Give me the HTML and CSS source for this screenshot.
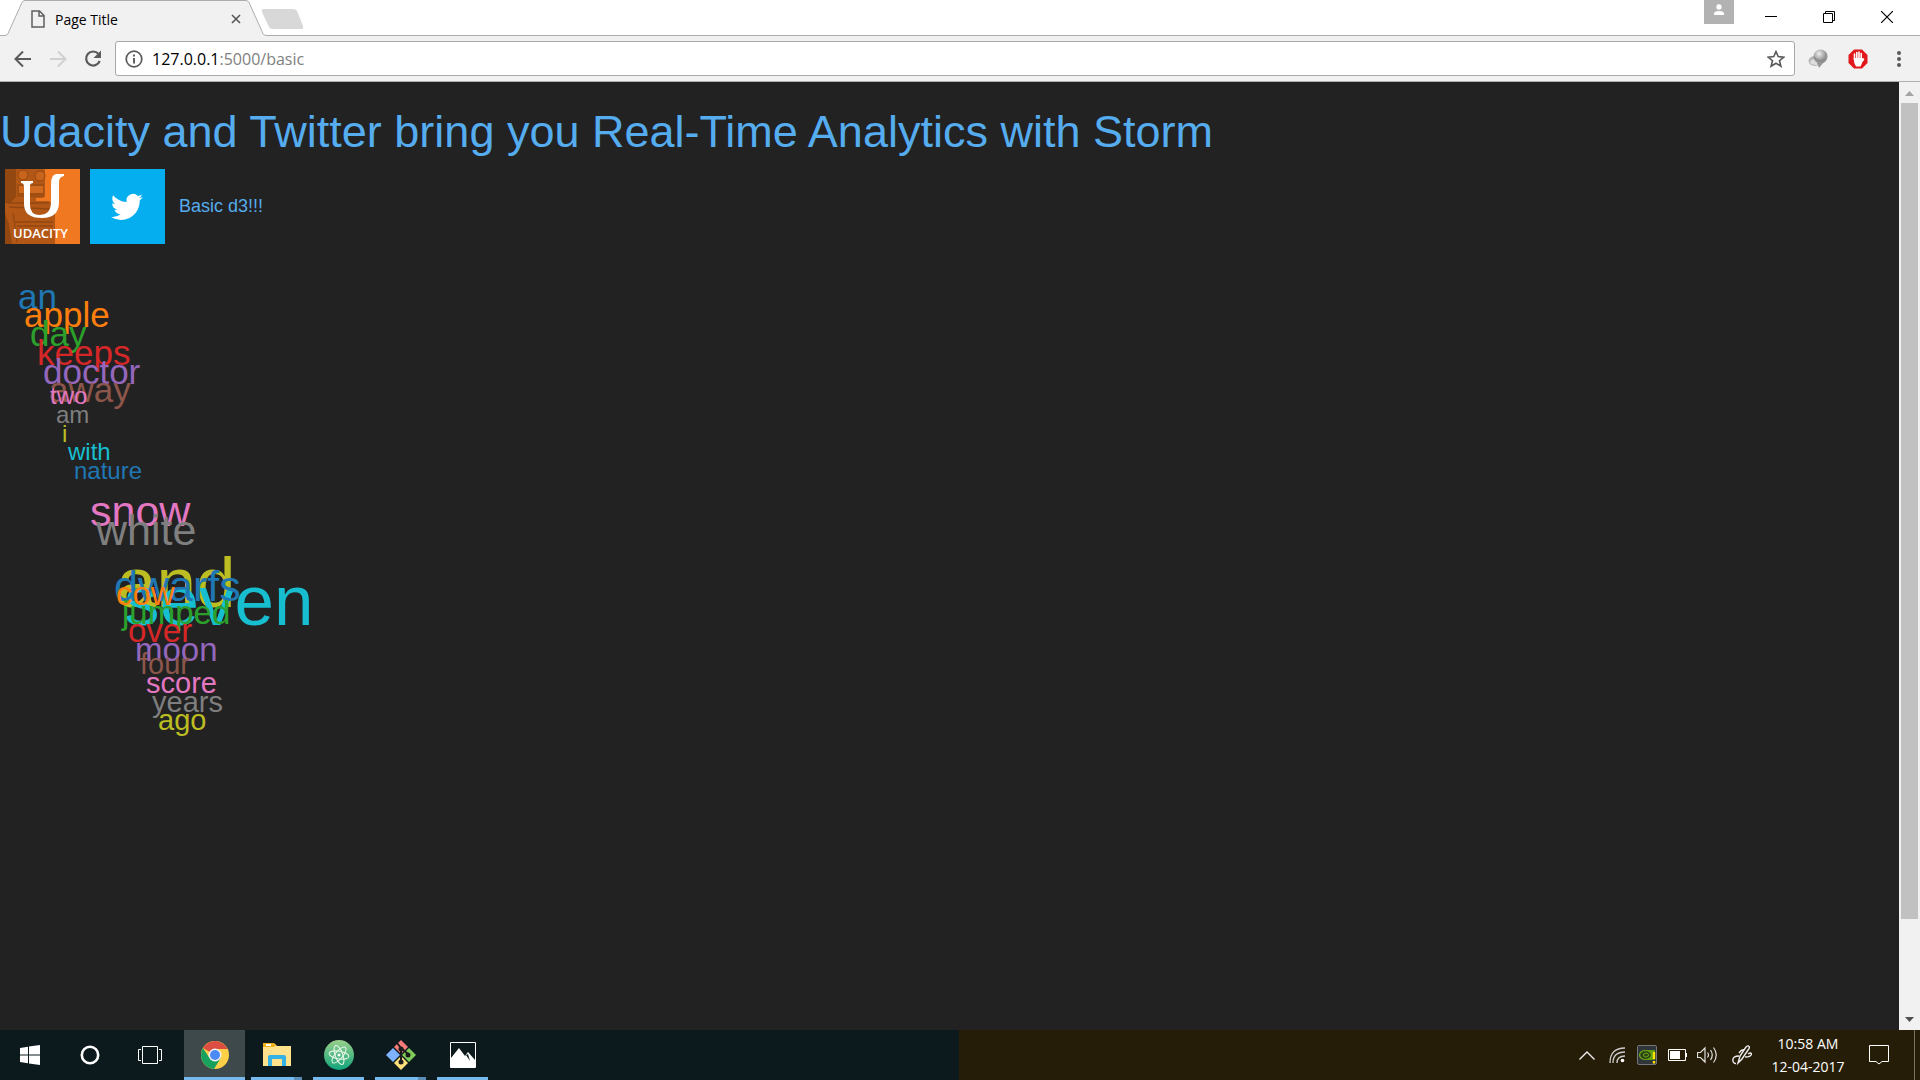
FILE: index.html
```html
<!DOCTYPE html>
<html lang="en">
<head>
<meta charset="utf-8">
<title>Page Title</title>
<link rel="stylesheet" href="styles.css">
</head>
<body>
<div class="screen">
  <header class="browser">
    <div class="tabstrip">
      <div class="tab">
        <svg class="tab-shape" width="266" height="36" viewBox="0 0 266 36"><path d="M0 36V35.500H5Q7 35.500 8 33.500L22 2.500Q23 .5 25 .5H246Q248 .5 249 2.500L263 33.500Q264 35.500 266 35.500V36Z" fill="#f1f1f1"/><path d="M0 35.500H5Q7 35.500 8 33.500L22 2.500Q23 .5 25 .5H246Q248 .5 249 2.500L263 33.500Q264 35.500 266 35.500" fill="none" stroke="#adadad"/></svg>
        <svg width="14" height="18" viewBox="0 0 14 18" fill="none" stroke="#5f5f5f" stroke-width="1.500"><path d="M1 1H8.500L13 5.500V17H1ZM8 1V6H13"/></svg>
        <span class="tab-title">Page Title</span>
        <button class="tab-close" aria-label="Close tab"><svg width="10" height="10" viewBox="0 0 10 10" stroke="#555" stroke-width="1.600"><path d="M1 1L9 9M9 1L1 9"/></svg></button>
      </div>
      <button class="new-tab" aria-label="New tab"><svg width="44" height="22" viewBox="0 0 44 22"><path d="M3 1H32Q35 1 36 3L42 18Q43 21 40 21H12Q9 21 8 19L1 4Q0 1 3 1Z" fill="#d8d8d8"/></svg></button>
      <div class="window-controls">
        <button class="profile" aria-label="Profile"><svg width="12" height="12" viewBox="0 0 12 12" fill="#fff"><circle cx="6" cy="3" r="2.700"/><path d="M1 11V9.500Q1 7 6 7T11 9.500V11Z"/></svg></button>
        <button aria-label="Minimize"><svg width="12" height="12" viewBox="0 0 12 12" stroke="#000"><path d="M0 5.500H12"/></svg></button>
        <button aria-label="Restore"><svg width="12" height="12" viewBox="0 0 12 12" stroke="#000" fill="none"><path d="M.5 2.500H9.500V11.500H.5ZM2.500 2.500V.5H11.500V9.500H9.500"/></svg></button>
        <button aria-label="Close"><svg width="12" height="12" viewBox="0 0 12 12" stroke="#000" stroke-width="1.200"><path d="M0 0L12 12M12 0L0 12"/></svg></button>
      </div>
    </div>
    <div class="toolbar">
      <div class="nav">
        <button aria-label="Back"><svg width="18" height="18" viewBox="0 0 18 18" fill="none" stroke="#5a5a5a" stroke-width="2"><path d="M17 9H2M9 1.500L1.500 9L9 16.500"/></svg></button>
        <button aria-label="Forward"><svg width="18" height="18" viewBox="0 0 18 18" fill="none" stroke="#d0d0d0" stroke-width="2"><path d="M1 9H16M9 1.500L16.500 9L9 16.500"/></svg></button>
        <button aria-label="Reload"><svg width="18" height="18" viewBox="0 0 18 18"><path d="M14.500 4A7 7 0 1 0 15.700 11" fill="none" stroke="#5a5a5a" stroke-width="2.200"/><path d="M17 .5V8H9.500Z" fill="#5a5a5a"/></svg></button>
      </div>
      <div class="omnibox">
        <svg width="18" height="18" viewBox="0 0 18 18"><circle cx="9" cy="9" r="7.800" fill="none" stroke="#5a5a5a" stroke-width="1.700"/><path d="M9 8V13.500M9 4.500V6.500" stroke="#5a5a5a" stroke-width="1.900"/></svg>
        <a class="url" href="/basic">127.0.0.1<span class="url-path">:5000/basic</span></a>
        <button class="star" aria-label="Bookmark"><svg width="18" height="18" viewBox="0 0 18 18"><path d="M9 1.500L11.200 6.600L16.800 7.100L12.500 10.700L13.900 16.200L9 13.200L4.100 16.200L5.500 10.700L1.200 7.100L6.800 6.600Z" fill="none" stroke="#5a5a5a" stroke-width="1.600"/></svg></button>
      </div>
      <div class="extensions">
        <button aria-label="Extension"><svg width="20" height="20" viewBox="0 0 20 20"><defs><radialGradient id="ball" cx=".4" cy=".3"><stop offset="0" stop-color="#eee"/><stop offset="1" stop-color="#929292"/></radialGradient></defs><ellipse cx="7" cy="12" rx="6.500" ry="5" fill="#b5b5b5"/><ellipse cx="8" cy="13" rx="6" ry="3" fill="#ddd"/><path d="M9 14L11 19L16 13Z" fill="#999"/><circle cx="12.500" cy="7.500" r="7" fill="url(#ball)"/><path d="M6 8Q11 14 18 10" fill="none" stroke="#888"/></svg></button>
        <button aria-label="Ad blocker"><svg width="20" height="20" viewBox="0 0 20 20"><path d="M6 .5H14L19.500 6V14L14 19.500H6L.5 14V6Z" fill="#e1191d"/><path d="M6.500 5V11M8.800 3.500V10M11 3V10M13.200 4.500V11" stroke="#fff" stroke-width="1.600" stroke-linecap="round"/><path d="M5.700 9H14L16 9.500Q17 10 14.500 13L12.500 17.500H8Q5.700 14 5.700 9Z" fill="#fff"/></svg></button>
      </div>
      <button class="menu" aria-label="Menu"><svg width="6" height="18" viewBox="0 0 6 18" fill="#5a5a5a"><circle cx="3" cy="3" r="2"/><circle cx="3" cy="9" r="2"/><circle cx="3" cy="15" r="2"/></svg></button>
    </div>
  </header>

  <div class="viewport">
    <main class="page">
      <h1>Udacity and Twitter bring you Real-Time Analytics with Storm</h1>
      <div class="brands">
        <svg class="logo" viewBox="0 0 75 75" role="img" aria-label="Udacity">
          <path d="M0 0H75V75H0Z" fill="#f07820"/>
          <path d="M0 0H40V26Q40 29 37 29H31V32H44L50 38V75H0Z" fill="#b35716"/>
          <path d="M0 0H11V28L5 34H0ZM0 44L4 55L7 75H0Z" fill="#944811"/>
          <path d="M12 15H39V28H12Z" fill="#a04e12"/>
          <circle cx="18" cy="6" r="5" fill="#c9641d" stroke="#944811"/><circle cx="35" cy="7" r="5" fill="#c9641d" stroke="#944811"/>
          <path d="M14 17H38V24H14Z" fill="#d06a20"/>
          <path d="M2 34H44M4 38L44 40M8 44L12 73M10 53H48M12 57H48" fill="none" stroke="#944811" stroke-width="1.300"/>
          <path d="M16 12H28V14Q25 14 25 17V36Q25 46 35 46Q45 46 46 35V15Q46 6 51 5H59V7Q54 8 54 13V33Q54 49 37 49Q19 49 19 35V18Q19 14 16 14Z" fill="#fff"/>
          <text class="logo-name" x="8" y="69" fill="#fff">UDACITY</text>
        </svg>
        <svg class="logo" viewBox="0 0 75 75" role="img" aria-label="Twitter">
          <path d="M0 0H75V75H0Z" fill="#05aeef"/>
          <path transform="translate(21 22) scale(1.330)" d="M23.950 4.570a10 10 0 0 1-2.820.77 4.960 4.960 0 0 0 2.160-2.720c-.95.550-2 .950-3.120 1.180a4.920 4.920 0 0 0-8.380 4.480C7.690 8.090 4.070 6.130 1.640 3.160a4.800 4.800 0 0 0-.66 2.470c0 1.710.87 3.210 2.180 4.100a4.900 4.900 0 0 1-2.230-.61v.06a4.920 4.920 0 0 0 3.950 4.820 5 5 0 0 1-2.210.09 4.940 4.940 0 0 0 4.600 3.420A9.870 9.870 0 0 1 0 19.540a14 14 0 0 0 7.550 2.210c9.050 0 14-7.500 14-13.980 0-.21 0-.42-.02-.63a9.900 9.900 0 0 0 2.460-2.550z" fill="#fff"/>
        </svg>
        <span class="caption">Basic d3!!!</span>
      </div>
      <svg class="cloud" width="600" height="480">
        <g class="s35">
          <text x="18" y="39" fill="#1f77b4">an</text>
          <text x="24" y="57" fill="#ff7f0e">apple</text>
          <text x="30" y="76" fill="#2ca02c">day</text>
          <text x="37" y="95" fill="#d62728">keeps</text>
          <text x="43" y="114" fill="#9467bd">doctor</text>
          <text x="49" y="132" fill="#8c564b">away</text>
        </g>
        <g class="s24">
          <text x="50" y="134" fill="#e377c2">two</text>
          <text x="56" y="153" fill="#7f7f7f">am</text>
          <text x="62" y="172" fill="#bcbd22">i</text>
          <text x="68" y="190" fill="#17becf">with</text>
          <text x="74" y="209" fill="#1f77b4">nature</text>
        </g>
        <g class="s43">
          <text x="90" y="256" fill="#e377c2">snow</text>
          <text x="96" y="275" fill="#7f7f7f">white</text>
        </g>
        <g class="s71">
          <text x="117" y="337" fill="#bcbd22">and</text>
          <text x="124" y="355" fill="#17becf">seven</text>
        </g>
        <g class="s43">
          <text x="114" y="331" fill="#1f77b4">dwarfs</text>
        </g>
        <g class="s33">
          <text x="116" y="335" fill="#ff7f0e">cow</text>
          <text x="122" y="354" fill="#2ca02c">jumped</text>
          <text x="128" y="372" fill="#d62728">over</text>
          <text x="135" y="391" fill="#9467bd">moon</text>
        </g>
        <g class="s29">
          <text x="140" y="404" fill="#8c564b">four</text>
          <text x="146" y="423" fill="#e377c2">score</text>
          <text x="152" y="442" fill="#7f7f7f">years</text>
          <text x="158" y="460" fill="#bcbd22">ago</text>
        </g>
      </svg>
    </main>
    <div class="scrollbar">
      <svg width="9" height="5" viewBox="0 0 9 5"><path d="M0 5L4.500 0L9 5Z" fill="#a3a3a3"/></svg>
      <div class="track"><div class="thumb"></div></div>
      <svg width="9" height="5" viewBox="0 0 9 5"><path d="M0 0L4.500 5L9 0Z" fill="#505050"/></svg>
    </div>
  </div>

  <footer class="taskbar">
    <button class="sys" aria-label="Start"><svg width="20" height="20" viewBox="0 0 20 20" fill="#fff"><path d="M0 3L8 1.800V9.500H0ZM9 1.600L20 0V9.500H9ZM0 10.500H8V18.200L0 17ZM9 10.500H20V20L9 18.400Z"/></svg></button>
    <button class="sys" aria-label="Cortana"><svg width="20" height="20" viewBox="0 0 20 20"><circle cx="10" cy="10" r="8.200" fill="none" stroke="#fff" stroke-width="2.600"/></svg></button>
    <button class="sys" aria-label="Task view"><svg width="24" height="18" viewBox="0 0 24 18" fill="none" stroke="#fff"><path d="M4.500.5H19.500V17.500H4.500ZM3 3.500H.5V14.500H3M21 3.500H23.500V14.500H21"/></svg></button>
    <button class="app active" aria-label="Chrome"><svg width="28" height="28" viewBox="0 0 28 28"><circle cx="14" cy="14" r="14" fill="#fdd047"/><path d="M14 14L1.900 7A14 14 0 0 1 26.100 7Q27 8 27 8H14Z" fill="#dc4e41"/><path d="M1.900 7A14 14 0 0 0 13 28L19.500 17.500L14 14L8.500 17Z" fill="#17a05e"/><circle cx="14" cy="14" r="6.500" fill="#f1f1f1"/><circle cx="14" cy="14" r="5" fill="#4b8af4"/></svg></button>
    <button class="app stacked" aria-label="File Explorer"><svg width="28" height="24" viewBox="0 0 28 24"><path d="M0 1H12L14 3H28V23H0Z" fill="#ffe28b"/><path d="M0 0H11L13 2L11 4H0Z" fill="#eeb31c"/><path d="M3 1H8V3H3Z" fill="#fff"/><path d="M5 23V14Q5 12 7 12H21Q23 12 23 14V23H19V16H9V23Z" fill="#35b1e6"/></svg></button>
    <button class="app" aria-label="Atom"><svg width="30" height="30" viewBox="0 0 30 30"><defs><linearGradient id="atom" x2="0" y2="1"><stop offset="0" stop-color="#9ad08b"/><stop offset="1" stop-color="#10a37c"/></linearGradient></defs><circle cx="15" cy="15" r="15" fill="url(#atom)"/><g fill="none" stroke="#e4f5e6" stroke-width="1.100"><ellipse cx="15" cy="15" rx="10" ry="3.800" transform="rotate(10 15 15)"/><ellipse cx="15" cy="15" rx="10" ry="3.800" transform="rotate(70 15 15)"/><ellipse cx="15" cy="15" rx="10" ry="3.800" transform="rotate(130 15 15)"/></g><circle cx="15" cy="15" r="1.500" fill="#fff"/></svg></button>
    <button class="app stacked" aria-label="Git"><svg width="30" height="30" viewBox="0 0 30 30"><path d="M15 0L22 7L15 14L8 7Z" fill="#f77b7b"/><path d="M23 8L30 15L23 22L16 15Z" fill="#80cc5b"/><path d="M7 8L14 15L7 22L0 15Z" fill="#80b3ff"/><path d="M15 16L22 23L15 30L8 23Z" fill="#ffe07a"/><path d="M11 3L15 8V22M15 8L22 14" fill="none" stroke="#1c1c1c" stroke-width="2"/><circle cx="15" cy="9" r="2.500" fill="#1c1c1c"/><circle cx="22" cy="15" r="2.500" fill="#1c1c1c"/><circle cx="15" cy="22" r="2.500" fill="#1c1c1c"/></svg></button>
    <button class="app" aria-label="Photos"><svg width="26" height="26" viewBox="0 0 26 26"><path d="M.5.5H25.500V25.500H.5Z" fill="#0d1a1d" stroke="#fff"/><path d="M1 16L9 6L15 14L18 10L25 18V25H1Z" fill="#fff"/><path d="M16 13L20 19L18 12Z" fill="#0d1a1d"/></svg></button>
    <div class="tray">
      <button aria-label="Show hidden icons"><svg width="16" height="9" viewBox="0 0 16 9" fill="none" stroke="#eee" stroke-width="1.400"><path d="M.5 8.500L8 1L15.500 8.500"/></svg></button>
      <button aria-label="Wi-Fi"><svg width="16" height="16" viewBox="0 0 16 16" fill="none" stroke="#ccc" stroke-width="1.300"><path d="M1 16Q1 1 16 1M4 16Q4 5 16 5M8 16Q8 9 16 9"/><circle cx="13.500" cy="13.500" r="1.800" fill="#fff" stroke="none"/></svg></button>
      <button aria-label="NVIDIA"><svg width="20" height="20" viewBox="0 0 20 20"><rect x=".5" y=".5" width="19" height="19" rx="1.500" fill="#2f3539" stroke="#73777a"/><path d="M8 5H18V15H8Z" fill="#5f9d0c"/><ellipse cx="8.500" cy="10" rx="6" ry="4.500" fill="#2f4513" stroke="#6ba814" stroke-width="1.200"/><ellipse cx="9" cy="10" rx="2.500" ry="2" fill="none" stroke="#6ba814"/><path d="M17 7V14M17 16V18.500" stroke="#ffe500" stroke-width="2.400"/></svg></button>
      <button aria-label="Battery"><svg width="19" height="12" viewBox="0 0 19 12"><path d="M.5.5H17.500V11.500H.5Z" fill="none" stroke="#fff"/><path d="M2 2H12V10H2ZM18 4H19V8H18Z" fill="#fff"/></svg></button>
      <button aria-label="Volume"><svg width="20" height="18" viewBox="0 0 20 18" fill="none" stroke="#e0e0e0" stroke-width="1.200"><path d="M.5 6.500H3.500L8 2V16L3.500 11.500H.5ZM10.500 6.500Q12.500 9 10.500 11.500M13.500 4Q17 9 13.500 14M16.500 1.500Q22 9 16.500 16.500"/></svg></button>
      <button class="ink" aria-label="Ink workspace"><svg width="20" height="20" viewBox="0 0 20 20" fill="none" stroke="#eee" stroke-width="1.400"><path d="M6 18L8 11L14 2Q16 0 17 1.500T16 5L10 14ZM7 11Q1 11 .8 15Q1 18.500 4 18.500M7 8Q10 4 12 5M13 12Q19 12 19.500 9Q19 7 16 9"/></svg></button>
      <time class="clock" datetime="2017-04-12T10:58"><span>10:58 AM</span><span>12-04-2017</span></time>
      <button aria-label="Notifications"><svg width="20" height="20" viewBox="0 0 20 20" fill="none" stroke="#fff"><path d="M.5.5H19.500V16.500H13L10 19L7 16.500H.5Z"/></svg></button>
      <button class="show-desktop" aria-label="Show desktop"></button>
    </div>
  </footer>
</div>
</body>
</html>
```
FILE: styles.css
```css
* { box-sizing: border-box; }
body { margin: 0; font-family: "Liberation Sans", Arial, sans-serif; }
button { display: flex; align-items: center; justify-content: center; padding: 0; border: 0; background: none; }
svg { display: block; flex-shrink: 0; }

.screen { display: flex; flex-direction: column; min-height: 100vh; }

.browser { font-family: "Open Sans", "Noto Sans", sans-serif; background: #f1f1f1; border-bottom: 1px solid #b0b0b0; }
.tabstrip { display: flex; height: 36px; background: #fff; border-bottom: 1px solid #adadad; }
.tab { position: relative; display: flex; align-items: center; width: 266px; height: 36px; padding: 2px 24px 0 31px; }
.tab-shape { position: absolute; top: 0; left: 0; }
.tab svg, .tab span, .tab button { z-index: 1; }
.tab .tab-shape { z-index: 0; }
.tab > svg:not(.tab-shape) { position: relative; }
.tab-title { flex: 1; margin-left: 10px; font-size: 14px; position: relative; }
.tab-close { position: relative; width: 12px; height: 12px; }
.new-tab { align-self: flex-start; margin: 8px 0 0 -5px; }
.window-controls { display: flex; margin-left: auto; height: 34px; padding-right: 4px; }
.window-controls button { width: 58px; }
.window-controls .profile { width: 30px; height: 24px; padding-bottom: 4px; margin-right: 8px; background: #b2b2b2; }

.toolbar { display: flex; align-items: center; gap: 13px; height: 45px; padding: 0 18px 0 14px; }
.nav { display: flex; gap: 17px; }
.extensions { display: flex; gap: 20px; }
.omnibox { display: flex; flex: 1; align-items: center; height: 35px; padding: 0 9px; border: 1px solid #a8a8a8; border-radius: 3px; background: #fff; }
.url { margin-left: 9px; font-size: 16px; color: #000; text-decoration: none; }
.url-path { color: #808080; }
.star { margin-left: auto; }
.menu { margin-left: 15px; }

.viewport { display: flex; flex: 1; background: #222; }
.page { flex: 1; color: #55acee; }
h1 { margin: 25px 0 12px; font-size: 45px; line-height: 50px; font-weight: 400; }
.brands { display: flex; align-items: center; gap: 10px; padding-left: 5px; }
.logo { width: 75px; height: 75px; }
.logo-name { font: 600 13px "Open Sans", sans-serif; }
.caption { margin-left: 4px; font-size: 18px; line-height: 20px; padding-bottom: 2px; }
.cloud { margin-top: 26px; }
.s24 { font-size: 24px; }
.s29 { font-size: 29px; }
.s33 { font-size: 33px; }
.s35 { font-size: 35px; }
.s43 { font-size: 43px; }
.s71 { font-size: 71px; }

.scrollbar { display: flex; flex-direction: column; align-items: center; width: 21px; padding: 9px 0 8px; background: #f1f1f1; }
.track { flex: 1; width: 17px; margin: 7px 0; }
.thumb { height: 90%; background: #c1c1c1; }

.taskbar { display: flex; height: 50px; background: linear-gradient(90deg, #0d1a1d 959px, #261d08 959px); }
.sys { width: 60px; }
.app { width: 51px; margin-right: 11px; padding-top: 3px; border-bottom: 3px solid #76b9ed; }
.active { width: 61px; margin: 0 6px 0 4px; background: #3e494b; }
.stacked { border-image: linear-gradient(90deg, #76b9ed 41px, #5b8fb8 41px) 3; }
.tray { display: flex; align-items: center; margin-left: auto; color: #fff; }
.tray button { width: 30px; }
.tray .ink { margin-left: 5px; }
.clock { display: flex; flex-direction: column; align-items: center; width: 78px; margin: 0 17px 0 12px; font: 14px/23px "Open Sans", "Noto Sans", sans-serif; }
.tray .show-desktop { width: 6px; height: 50px; margin-left: 20px; border-left: 1px solid #777160; }
```
